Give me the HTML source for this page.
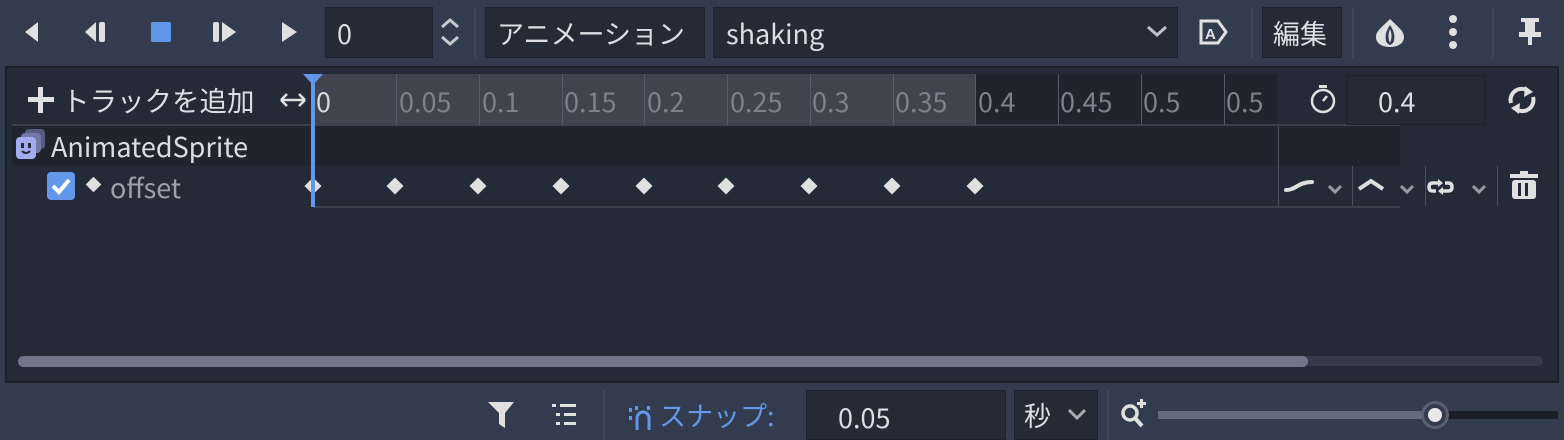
<!DOCTYPE html>
<html><head><meta charset="utf-8"><style>
*{margin:0;padding:0;box-sizing:border-box}
body{width:1564px;height:440px;background:#333b4f;position:relative;overflow:hidden;font-family:"Noto Sans CJK JP","Liberation Sans",sans-serif;color:#dcdee3}
.a{position:absolute}
.box{position:absolute;background:#252a37;border:1px solid #1e222c}
.t{position:absolute;font-size:27px;line-height:1;white-space:nowrap}
.sep{position:absolute;width:2px;background:#3e4659}
.tick{position:absolute;top:74px;height:51px;width:1px;background:#555a66}
.lbl{position:absolute;top:87px;font-size:27px;color:#7d818c;line-height:1}
.kf{position:absolute;width:12px;height:12px;background:#e0e0e0;transform:rotate(45deg)}
</style></head><body>
<svg class="a" style="left:0;top:0" width="320" height="66">
<path d="M25 32 L38 22 L38 42 Z" fill="#e0e0e0"/>
<path d="M85 32 L96 22 L96 42 Z" fill="#e0e0e0"/><rect x="99" y="22" width="6" height="20" rx="2" fill="#e0e0e0"/>
<rect x="151" y="22" width="20" height="20" rx="2" fill="#6397ea"/>
<rect x="213" y="22" width="6" height="20" rx="2" fill="#e0e0e0"/><path d="M222 22 L236 32 L222 42 Z" fill="#e0e0e0"/>
<path d="M282 22 L297 32 L282 42 Z" fill="#e0e0e0"/>
</svg>
<div class="box" style="left:325px;top:7px;width:108px;height:51px"></div>
<div class="t" style="left:337px;top:19px">0</div>
<svg class="a" style="left:438px;top:17px" width="24" height="30"><path d="M4 10 L12 3 L20 10 M4 20 L12 27 L20 20" stroke="#c8cad0" stroke-width="3" fill="none"/></svg>
<div class="sep" style="left:474px;top:7px;height:51px"></div>
<div class="box" style="left:485px;top:7px;width:220px;height:51px"></div>
<div class="t" style="left:497px;top:19px">アニメーション</div>
<div class="box" style="left:713px;top:7px;width:465px;height:51px"></div>
<div class="t" style="left:726px;top:19px">shaking</div>
<svg class="a" style="left:1145px;top:22px" width="24" height="20"><path d="M3 5 L12 13 L21 5" stroke="#c0c2c8" stroke-width="3" fill="none"/></svg>
<svg class="a" style="left:1198px;top:18px" width="32" height="30"><path d="M3 3 H20 L28 14 L20 25 H3 Z" stroke="#e0e0e0" stroke-width="3" fill="none"/><text x="7" y="21" font-size="15" font-weight="bold" fill="#e0e0e0" font-family="Liberation Sans">A</text></svg>
<div class="sep" style="left:1251px;top:7px;height:51px"></div>
<div class="box" style="left:1262px;top:7px;width:80px;height:51px"></div>
<div class="t" style="left:1273px;top:19px">編集</div>
<div class="sep" style="left:1352px;top:7px;height:51px"></div>
<svg class="a" style="left:1374px;top:17px" width="32" height="32"><path d="M16 2 C8 10 2 14 2 20 C2 27 9 30 16 30 C23 30 30 27 30 20 C30 14 24 10 16 2 Z" fill="#e0e0e0"/><path d="M16 8 C12 14 11 18 12 24 C13 27 16 28 16 28 C16 28 19 27 20 24 C21 18 20 14 16 8Z" fill="#333b4f"/><path d="M16 12 C14 17 14 21 16 26 C18 21 18 17 16 12Z" fill="#e0e0e0"/></svg>
<svg class="a" style="left:1443px;top:14px" width="20" height="36"><circle cx="10" cy="5" r="4" fill="#e0e0e0"/><circle cx="10" cy="18" r="4" fill="#e0e0e0"/><circle cx="10" cy="31" r="4" fill="#e0e0e0"/></svg>
<div class="sep" style="left:1492px;top:7px;height:51px"></div>
<svg class="a" style="left:1516px;top:16px" width="28" height="32"><rect x="5" y="2" width="18" height="4" fill="#e0e0e0"/><rect x="9" y="6" width="10" height="10" fill="#e0e0e0"/><rect x="3" y="16" width="22" height="5" fill="#e0e0e0"/><rect x="12" y="21" width="4" height="8" fill="#e0e0e0"/></svg>

<div class="a" style="left:5px;top:66px;width:1554px;height:317px;background:#252a38;border:2px solid #1c2029"></div>
<svg class="a" style="left:26px;top:87px" width="30" height="28"><rect x="12" y="0" width="5" height="26" fill="#e0e0e0"/><rect x="2" y="10" width="26" height="5" fill="#e0e0e0"/></svg>
<div class="t" style="left:62px;top:86px;font-size:27.5px">トラックを追加</div>
<svg class="a" style="left:278px;top:90px" width="30" height="20"><path d="M3 10 H27 M3 10 L9 4 M3 10 L9 16 M27 10 L21 4 M27 10 L21 16" stroke="#e0e0e0" stroke-width="2.5" fill="none"/></svg>
<div class="a" style="left:313px;top:74px;width:662px;height:51px;background:#41444f"></div>
<div class="a" style="left:975px;top:74px;width:302px;height:51px;background:#20242f"></div>
<div class="a" style="left:12px;top:124px;width:1388px;height:2px;background:#3b404d"></div>
<div class="tick" style="left:396px"></div><div class="tick" style="left:479px"></div><div class="tick" style="left:562px"></div><div class="tick" style="left:644px"></div><div class="tick" style="left:727px"></div><div class="tick" style="left:810px"></div><div class="tick" style="left:893px"></div><div class="tick" style="left:975px"></div><div class="tick" style="left:1058px"></div><div class="tick" style="left:1141px"></div><div class="tick" style="left:1224px"></div>
<div class="lbl" style="left:316px;color:#d8d8d8">0</div>
<div class="lbl" style="left:399px">0.05</div><div class="lbl" style="left:482px">0.1</div><div class="lbl" style="left:564px">0.15</div><div class="lbl" style="left:647px">0.2</div><div class="lbl" style="left:730px">0.25</div><div class="lbl" style="left:812px">0.3</div><div class="lbl" style="left:895px">0.35</div><div class="lbl" style="left:978px">0.4</div><div class="lbl" style="left:1060px">0.45</div><div class="lbl" style="left:1143px">0.5</div><div class="lbl" style="left:1226px">0.5</div>
<svg class="a" style="left:1308px;top:84px" width="30" height="32"><rect x="11" y="1" width="8" height="3" fill="#e0e0e0"/><circle cx="15" cy="17" r="11" stroke="#e0e0e0" stroke-width="2.5" fill="none"/><path d="M15 17 L19 12" stroke="#e0e0e0" stroke-width="2.5"/></svg>
<div class="box" style="left:1346px;top:75px;width:140px;height:50px"></div>
<div class="t" style="left:1378px;top:87px">0.4</div>
<svg class="a" style="left:1506px;top:84px" width="32" height="32"><path d="M5 19 A11 11 0 0 1 22 7" stroke="#e0e0e0" stroke-width="4" fill="none"/><path d="M19 2 L27 8 L18 13Z" fill="#e0e0e0"/><path d="M27 13 A11 11 0 0 1 10 25" stroke="#e0e0e0" stroke-width="4" fill="none"/><path d="M13 30 L5 24 L14 19Z" fill="#e0e0e0"/></svg>
<div class="a" style="left:12px;top:126px;width:1388px;height:40px;background:#20242f"></div>
<div class="a" style="left:1278px;top:126px;width:1px;height:81px;background:#4b505c"></div>
<svg class="a" style="left:14px;top:128px" width="34" height="34"><rect x="11" y="1" width="20" height="20" rx="4" fill="#565d7e"/><rect x="7" y="5" width="20" height="20" rx="4" fill="#7379a6"/><rect x="2" y="9" width="20" height="22" rx="4" fill="#a4acf0"/><rect x="7" y="15" width="3" height="5" fill="#252a38"/><rect x="14" y="15" width="3" height="5" fill="#252a38"/><path d="M8 23 Q12 27 16 23" stroke="#252a38" stroke-width="2" fill="none"/></svg>
<div class="t" style="left:51px;top:132px">AnimatedSprite</div>
<svg class="a" style="left:47px;top:172px" width="28" height="28"><rect x="0" y="0" width="28" height="28" rx="4" fill="#6397ea"/><path d="M6 14 L12 20 L22 8" stroke="#fff" stroke-width="4" fill="none"/></svg>
<div class="kf" style="left:88px;top:179px;width:11px;height:11px"></div>
<div class="t" style="left:110px;top:173px;color:#9ea1a9">offset</div>
<div class="a" style="left:313px;top:206px;width:1087px;height:2px;background:#3b404d"></div>
<div class="kf" style="left:307px;top:180px"></div>
<div class="kf" style="left:389px;top:180px"></div><div class="kf" style="left:472px;top:180px"></div><div class="kf" style="left:555px;top:180px"></div><div class="kf" style="left:638px;top:180px"></div><div class="kf" style="left:720px;top:180px"></div><div class="kf" style="left:803px;top:180px"></div><div class="kf" style="left:886px;top:180px"></div><div class="kf" style="left:969px;top:180px"></div>
<div class="a" style="left:311px;top:82px;width:4px;height:125px;background:#6397ea"></div>
<svg class="a" style="left:303px;top:74px" width="20" height="12"><path d="M0 0 H20 L10 11Z" fill="#6397ea"/></svg>
<div class="a" style="left:1352px;top:166px;width:1px;height:40px;background:#4b505c"></div>
<div class="a" style="left:1425px;top:166px;width:1px;height:40px;background:#4b505c"></div>
<div class="a" style="left:1497px;top:166px;width:1px;height:40px;background:#4b505c"></div>
<svg class="a" style="left:1280px;top:170px" width="280" height="36">
<path d="M6 20 C16 20 18 12 32 12" stroke="#e0e0e0" stroke-width="4" fill="none" stroke-linecap="round"/>
<path d="M49 16 L55 22 L61 16" stroke="#9a9ca3" stroke-width="3" fill="none"/>
<path d="M79 19 L91 11 L103 19" stroke="#e0e0e0" stroke-width="4" fill="none"/>
<path d="M121 16 L127 22 L133 16" stroke="#9a9ca3" stroke-width="3" fill="none"/>
<path d="M158 13 H153 Q149 13 149 17 Q149 21 153 21 H156 M163 21 H168 Q172 21 172 17 Q172 13 168 13 H165" stroke="#e0e0e0" stroke-width="3.5" fill="none"/>
<path d="M158 9 L163 13 L158 17Z M163 17 L158 21 L163 25Z" fill="#e0e0e0"/>
<path d="M193 16 L199 22 L205 16" stroke="#9a9ca3" stroke-width="3" fill="none"/>
<rect x="230" y="4" width="28" height="4" fill="#e0e0e0"/><rect x="240" y="1" width="8" height="4" fill="#e0e0e0"/>
<rect x="232" y="10" width="24" height="19" rx="3" fill="#e0e0e0"/><rect x="238" y="13" width="3" height="13" fill="#252a38"/><rect x="245" y="13" width="3" height="13" fill="#252a38"/>
</svg>
<div class="a" style="left:18px;top:356px;width:1525px;height:10px;border-radius:5px;background:#353b4a"></div>
<div class="a" style="left:18px;top:356px;width:1290px;height:11px;border-radius:6px;background:#72768a"></div>
<svg class="a" style="left:486px;top:400px" width="32" height="30"><path d="M2 2 H28 L19 13 V28 L13 24 V13 Z" fill="#e0e0e0"/></svg>
<svg class="a" style="left:550px;top:402px" width="30" height="26"><rect x="2" y="2" width="4" height="3" fill="#e0e0e0"/><rect x="10" y="2" width="16" height="3" fill="#e0e0e0"/><rect x="6" y="11" width="4" height="3" fill="#e0e0e0"/><rect x="14" y="11" width="12" height="3" fill="#e0e0e0"/><rect x="6" y="20" width="4" height="3" fill="#e0e0e0"/><rect x="14" y="20" width="12" height="3" fill="#e0e0e0"/></svg>
<div class="sep" style="left:603px;top:390px;height:50px"></div>
<svg class="a" style="left:627px;top:402px" width="32" height="28"><rect x="2" y="6" width="3" height="4" fill="#6397ea"/><rect x="2" y="14" width="3" height="4" fill="#6397ea"/><path d="M10 28 V16 A6 6 0 0 1 22 16 V28" stroke="#6397ea" stroke-width="3" fill="none"/><rect x="8" y="4" width="3" height="4" fill="#6397ea"/><rect x="20" y="4" width="3" height="4" fill="#6397ea"/></svg>
<div class="t" style="left:659px;top:401px;color:#6397ea">スナップ:</div>
<div class="box" style="left:806px;top:390px;width:200px;height:50px"></div>
<div class="t" style="left:838px;top:403px">0.05</div>
<div class="box" style="left:1014px;top:390px;width:84px;height:50px"></div>
<div class="t" style="left:1024px;top:401px">秒</div>
<svg class="a" style="left:1066px;top:405px" width="24" height="20"><path d="M3 5 L11 13 L19 5" stroke="#aaacb2" stroke-width="3" fill="none"/></svg>
<div class="sep" style="left:1107px;top:390px;height:50px"></div>
<svg class="a" style="left:1118px;top:398px" width="34" height="34"><circle cx="12" cy="15" r="7" stroke="#e0e0e0" stroke-width="3.5" fill="none"/><path d="M17 20 L24 28" stroke="#e0e0e0" stroke-width="4"/><rect x="19" y="4" width="9" height="3" fill="#e0e0e0"/><rect x="22" y="1" width="3" height="9" fill="#e0e0e0"/></svg>
<div class="a" style="left:1158px;top:411px;width:280px;height:8px;background:#666b7d"></div>
<div class="a" style="left:1438px;top:411px;width:120px;height:8px;background:#1b1e27"></div>
<div class="a" style="left:1421px;top:401px;width:28px;height:28px;border-radius:50%;background:#5a6070"></div>
<div class="a" style="left:1424px;top:404px;width:22px;height:22px;border-radius:50%;background:#353b4d"></div>
<div class="a" style="left:1428px;top:408px;width:14px;height:14px;border-radius:50%;background:#e8e8e8"></div>
</body></html>
